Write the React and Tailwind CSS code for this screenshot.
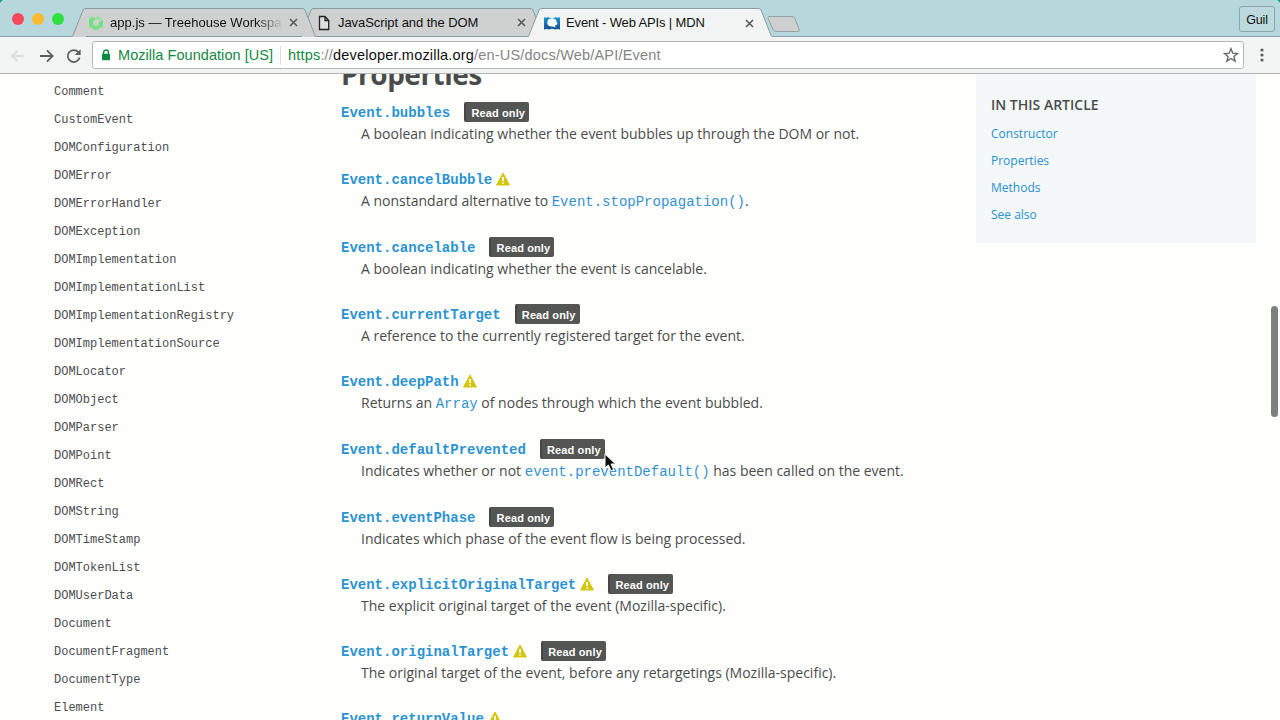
import React from "react";

const interfaces = [
  "Comment", "CustomEvent", "DOMConfiguration", "DOMError", "DOMErrorHandler",
  "DOMException", "DOMImplementation", "DOMImplementationList",
  "DOMImplementationRegistry", "DOMImplementationSource", "DOMLocator",
  "DOMObject", "DOMParser", "DOMPoint", "DOMRect", "DOMString", "DOMTimeStamp",
  "DOMTokenList", "DOMUserData", "Document", "DocumentFragment",
  "DocumentType", "Element",
];

const properties = [
  { name: "bubbles", readOnly: true, text: ["A boolean indicating whether the event bubbles up through the DOM or not."] },
  { name: "cancelBubble", tall: true, warn: true, text: ["A nonstandard alternative to ", "Event.stopPropagation()", "."] },
  { name: "cancelable", readOnly: true, text: ["A boolean indicating whether the event is cancelable."] },
  { name: "currentTarget", readOnly: true, text: ["A reference to the currently registered target for the event."] },
  { name: "deepPath", tall: true, warn: true, text: ["Returns an ", "Array", " of nodes through which the event bubbled."] },
  { name: "defaultPrevented", tall: true, readOnly: true, text: ["Indicates whether or not ", "event.preventDefault()", " has been called on the event."] },
  { name: "eventPhase", readOnly: true, text: ["Indicates which phase of the event flow is being processed."] },
  { name: "explicitOriginalTarget", warn: true, readOnly: true, text: ["The explicit original target of the event (Mozilla-specific)."] },
  { name: "originalTarget", warn: true, readOnly: true, text: ["The original target of the event, before any retargetings (Mozilla-specific)."] },
  { name: "returnValue", warn: true, text: [] },
];

function Warning() {
  return (
    <svg className="mb-px ml-1 h-3.5 w-3.5 shrink-0" viewBox="0 0 14 14">
      <path d="M7 1 L13.4 13 H0.6 Z" fill="#d4c50f" stroke="#d4c50f" strokeWidth="1" strokeLinejoin="round" />
      <path d="M7 5 V9" stroke="#fff" strokeWidth="1.7" />
      <path d="M7 10.2 V11.8" stroke="#fff" strokeWidth="1.7" />
    </svg>
  );
}

function Property({ item }) {
  return (
    <div className={item.tall ? "h-[68px] shrink-0" : "h-[67px] shrink-0"}>
      <dt className="flex h-5 items-center">
        <span className="pt-0.5 whitespace-nowrap font-['Liberation_Mono',monospace] text-[14px] leading-5 font-bold text-[#2b93d1]">
          Event.{item.name}
        </span>
        {item.warn && <Warning />}
        {item.readOnly && (
          <span className="ml-3.5 flex h-5 w-[65px] items-center justify-center rounded-xs border-l-2 border-[#464646] bg-[#545654] pt-0.5 pl-px font-['Liberation_Sans',sans-serif] text-[11px] font-bold tracking-[0.12px] whitespace-nowrap text-white">
            Read only
          </span>
        )}
      </dt>
      <dd className="ml-5 h-6 text-[14px] leading-6 whitespace-nowrap">
        {item.text[0]}
        {item.text[1] && (
          <span className="font-['Liberation_Mono',monospace] text-[#3591cf]">{item.text[1]}</span>
        )}
        {item.text[2]}
      </dd>
    </div>
  );
}

function Close() {
  return (
    <svg className="mr-px h-[9px] w-[9px] shrink-0" viewBox="0 0 9 9">
      <path d="M1 1 L8 8 M8 1 L1 8" stroke="#555a5a" strokeWidth="1.6" />
    </svg>
  );
}

function Tab({ active, className, icon, children }) {
  const fill = active ? "#f2f4f3" : "#cfd1d0";
  return (
    <div className={"flex h-[29px] w-[244px] shrink-0 " + className}>
      <svg className="h-[29px] w-3.5 shrink-0" viewBox="0 0 14 29">
        <path d="M0 29 L0.5 28 L11 2 Q11.8 0.5 14 0.5 V29 Z" fill={fill} />
        <path d="M0.5 28.5 L11 2 Q11.8 0.5 14 0.5" fill="none" stroke="#8c9b9d" />
      </svg>
      <div className={"flex min-w-0 grow items-center border-[#8c9b9d] pr-[3px] pl-0.5 " + (active ? "border-t bg-[#f2f4f3]" : "border-y bg-[#cfd1d0]")}>
        {icon}
        {children}
        <Close />
      </div>
      <svg className="h-[29px] w-3.5 shrink-0" viewBox="0 0 14 29">
        <path d="M14 29 L13.5 28 L3 2 Q2.2 0.5 0 0.5 V29 Z" fill={fill} />
        <path d="M13.5 28.5 L3 2 Q2.2 0.5 0 0.5" fill="none" stroke="#8c9b9d" />
      </svg>
    </div>
  );
}

function TabStrip() {
  return (
    <div className="flex h-[37px] shrink-0 bg-[#b6d8dc] shadow-[inset_0_-1px_0_#8ba3a6]">
      <div className="flex w-[72px] items-center gap-2 pt-px pl-3">
        <span className="h-3 w-3 rounded-full bg-[#f4495c]" />
        <span className="h-3 w-3 rounded-full bg-[#f8bb32]" />
        <span className="h-3 w-3 rounded-full bg-[#2fe041]" />
      </div>
      <div className="flex pt-2 text-[13px] text-[#111]">
        <Tab
          className="z-10"
          icon={
            <svg className="h-4 w-4 shrink-0" viewBox="0 0 16 16">
              <path d="M4 1.6 L8 4 L5.2 6 V9.6 L8 11.4 L10.8 9.6 V7 L15 4.8 V11.6 L8 15.6 L1 11.6 V4 Z" fill="#74e080" />
              <path d="M8.6 .8 L14.2 3.6 L11.2 5.8 L8.4 4.2 Z" fill="#8fe698" />
            </svg>
          }
        >
          <span className="ml-[6px] w-[172px] shrink-0 overflow-hidden whitespace-nowrap tracking-[0.02px] [mask-image:linear-gradient(to_right,black_145px,transparent_174px)]">
            app.js — Treehouse Workspace
          </span>
          <span className="w-1 grow" />
        </Tab>
        <Tab
          className="-ml-4"
          icon={
            <svg className="h-4 w-4 shrink-0" viewBox="0 0 16 16">
              <path d="M3.5 1.5 H9 L12.7 5.5 V14.5 H3.5 Z M9 1.5 V5.5 H12.7" fill="#dedfdf" stroke="#222" strokeWidth="1.3" />
            </svg>
          }
        >
          <span className="ml-[6px] grow whitespace-nowrap tracking-[-0.06px]">JavaScript and the DOM</span>
        </Tab>
        <Tab
          active
          className="z-20 -ml-4"
          icon={
            <svg className="h-4 w-4 shrink-0" viewBox="0 0 16 16">
              <defs>
                <linearGradient id="mdn" x1="0" y1="0" x2="0" y2="1">
                  <stop offset="0" stopColor="#1e9ad0" />
                  <stop offset="1" stopColor="#14508f" />
                </linearGradient>
              </defs>
              <path d="M0 2.2 Q2.5 3 4.5 2 Q8 5 11.5 2 Q13.5 3 16 2.2 V14.4 Q13 13.4 11 14.6 L8 13.8 L5 14.6 Q3 13.4 0 14.4 Z" fill="url(#mdn)" />
              <path d="M7.8 3.4 Q12.6 3.6 12.7 7.4 L13.6 8.8 L12 10.4 L11 9.8 L11.4 12.4 L8.6 11.4 Q3.3 11.6 3.3 7.4 Q3.6 3.5 7.8 3.4 Z" fill="#fff" />
            </svg>
          }
        >
          <span className="ml-[6px] grow whitespace-nowrap tracking-[-0.14px]">Event - Web APIs | MDN</span>
        </Tab>
        <svg className="mt-[7px] -ml-[5px] h-[18px] w-[34px]" viewBox="0 0 34 18">
          <path d="M2 1.5 H25 Q27 1.5 27.8 3.4 L32.2 14.4 Q33 16.5 31 16.5 H9 Q7 16.5 6 14.4 L1 3 Q.6 1.5 2 1.5 Z" fill="#cdd0cf" stroke="#93a2a4" />
        </svg>
      </div>
      <div className="ml-auto pt-1.5 pr-[5px]">
        <div className="flex h-[26px] w-9 items-center justify-center rounded-[3px] border border-[#8aa6aa] bg-[#bcdadd] pt-0.5 text-[12.5px] tracking-[-0.2px] text-[#111]">
          Guil
        </div>
      </div>
    </div>
  );
}

function Toolbar() {
  return (
    <div className="flex h-[37px] shrink-0 items-center border-b border-[#b3b5b4] bg-[#f2f4f3]">
      <div className="flex w-[92px] items-center gap-[11px] pt-px pl-2.5">
        <svg className="h-4 w-4" viewBox="0 0 16 16" fill="none" stroke="#dcdedd" strokeWidth="1.8">
          <path d="M14 8 H2 M7.5 2.6 L2 8 L7.5 13.4" />
        </svg>
        <svg className="ml-0.5 h-4 w-4" viewBox="0 0 16 16" fill="none" stroke="#5c5f5e" strokeWidth="1.8">
          <path d="M1 8 H13.4 M8 2.4 L13.6 8 L8 13.6" />
        </svg>
        <svg className="h-4 w-4" viewBox="0 0 16 16">
          <path d="M13.6 9.5 A6 6 0 1 1 12.4 4.2" fill="none" stroke="#5c5f5e" strokeWidth="1.8" />
          <path d="M14.6 1.2 V7 H8.8 Z" fill="#5c5f5e" />
        </svg>
      </div>
      <div className="flex h-7 w-[1152px] items-center rounded-[3px] border border-[#b5b8b7] bg-white pr-[4px] pl-2 text-[14.5px] whitespace-nowrap">
        <svg className="h-3 w-[10px]" viewBox="0 0 10 12">
          <path d="M2.6 6 V3.4 A2.4 2.4 0 0 1 7.4 3.4 V6" fill="none" stroke="#0f8a43" strokeWidth="1.4" />
          <rect x="1" y="4.8" width="8" height="6.4" rx=".7" fill="#0f8a43" />
        </svg>
        <span className="ml-[7px] w-[155px] pt-0.5 tracking-[0.05px] text-[#14883f]">Mozilla Foundation [US]</span>
        <span className="ml-[7px] h-[19px] w-px bg-[#dfe1e0]" />
        <span className="ml-[7px] flex pt-0.5 tracking-[0.19px] text-[#818583]">
          <span className="text-[#14883f]">https</span>
          <span>://</span>
          <span className="text-[#111]">developer.mozilla.org</span>
          <span>/en-US/docs/Web/API/Event</span>
        </span>
        <svg className="ml-auto h-4 w-4" viewBox="0 0 16 16">
          <path d="M8 1.8 L9.8 6.2 L14.5 6.5 L10.9 9.5 L12.1 14.1 L8 11.5 L3.9 14.1 L5.1 9.5 L1.5 6.5 L6.2 6.2 Z" fill="none" stroke="#666968" strokeWidth="1.4" />
        </svg>
      </div>
      <svg className="ml-4 h-4 w-1" viewBox="0 0 4 16" fill="#5c5f5e">
        <circle cx="2" cy="3" r="1.6" />
        <circle cx="2" cy="8" r="1.6" />
        <circle cx="2" cy="13" r="1.6" />
      </svg>
    </div>
  );
}

export default function App() {
  return (
    <div className="h-[720px] w-[1280px] overflow-hidden bg-[#12a18c]">
      <div className="relative flex h-full w-full flex-col overflow-hidden rounded-t-[5px] bg-[#fefefd] font-['Liberation_Sans',sans-serif]">
        <TabStrip />
        <Toolbar />
        <main className="flex min-h-0 grow overflow-hidden font-['Open_Sans',sans-serif] text-[#4a4c4b]">
          <nav className="w-[341px] shrink-0 pt-1 pl-[54px]">
            {interfaces.map((name) => (
              <div key={name} className="flex h-7 items-center font-['Liberation_Mono',monospace] text-[12px] text-[#4b4d50]">
                {name}
              </div>
            ))}
          </nav>
          <article className="flex w-[635px] shrink-0 flex-col">
            <h2 className="-mt-[19px] h-[47px] shrink-0 text-[28px] leading-[38px] font-bold tracking-[-0.5px]">Properties</h2>
            <dl className="flex flex-col">
              {properties.map((p) => (
                <Property key={p.name} item={p} />
              ))}
            </dl>
          </article>
          <aside className="flex h-[169px] w-[280px] shrink-0 flex-col bg-[#f4f8f9] pt-[18px] pl-[15px]">
            <h3 className="h-[27px] text-[14px] leading-[25px] font-semibold">IN THIS ARTICLE</h3>
            {["Constructor", "Properties", "Methods", "See also"].map((t) => (
              <a key={t} className="h-[27px] text-[12px] leading-[29px] text-[#2a8fd0]">{t}</a>
            ))}
          </aside>
          <div className="flex grow justify-end pt-[232px] pr-0.5">
            <div className="h-[111px] w-[7px] rounded-full bg-[#7e807f]" />
          </div>
        </main>
        <svg className="absolute top-[453px] left-[604px] h-[19px] w-[13px]" viewBox="0 0 13 19">
          <path d="M1 1 V15 L4.4 12 L7 17.8 L9.6 16.7 L7.1 11 H11.6 Z" fill="#111" stroke="#fff" />
        </svg>
      </div>
    </div>
  );
}
